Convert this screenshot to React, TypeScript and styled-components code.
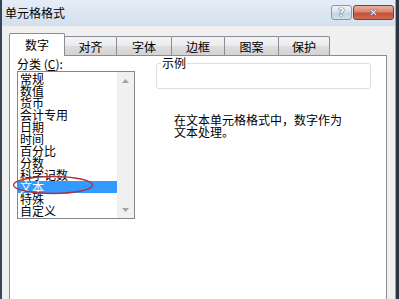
import React from "react";
import styled, { createGlobalStyle } from "styled-components";

const GlobalStyle = createGlobalStyle`
  html, body { margin: 0; padding: 0; overflow: hidden; background: #ffffff; }
  body { font-family: "Noto Sans CJK SC", "Noto Sans", sans-serif; font-size: 12px; color: #000; }
`;

const Window = styled.div`
  width: 399px;
  height: 299px;
  box-sizing: border-box;
  display: flex;
  flex-direction: column;
  background: #7eaad6;
  border-left: 2px solid #3a4656;
  border-right: 3px solid #2d3640;
  padding-right: 1px;
  overflow: hidden;
`;

const TitleBar = styled.div`
  height: 26px;
  flex: none;
  display: flex;
  align-items: flex-start;
  background: linear-gradient(#e4edf7, #d4e0ee);
  padding: 0 1px 0 3px;
`;

const Title = styled.span`
  margin-top: 6px;
  line-height: 14px;
  font-size: 12px;
  color: #000;
`;

const CaptionButtons = styled.div`
  margin-left: auto;
  margin-top: 5px;
  display: flex;
  gap: 1px;
`;

const CaptionButton = styled.div<{ $close?: boolean; $w: number }>`
  width: ${(p) => p.$w}px;
  height: 15px;
  box-sizing: border-box;
  border-radius: 3px;
  border: 1px solid ${(p) => (p.$close ? "#8a3a2c" : "#8398ae")};
  background: ${(p) =>
    p.$close
      ? "linear-gradient(#eab0a2 0%, #d98470 45%, #c4503a 55%, #cf6a52 100%)"
      : "linear-gradient(#eef3f9 0%, #d8e3ef 45%, #c2d3e6 55%, #d2deec 100%)"};
  display: flex;
  align-items: center;
  justify-content: center;
  color: #fff;
  font-family: "DejaVu Sans", sans-serif;
  font-weight: bold;
  font-size: ${(p) => (p.$close ? 10 : 11)}px;
  line-height: 1;
  text-shadow: 0 0 1px #334, 0 0 1px #334;
`;

const Client = styled.div`
  flex: 1;
  display: flex;
  flex-direction: column;
  background: #f0f0f0;
  padding: 7px 8px 0 7px;
  min-height: 0;
`;

const TabStrip = styled.div`
  height: 22px;
  flex: none;
  display: flex;
  align-items: flex-end;
`;

const Tab = styled.div<{ $active?: boolean; $w: number }>`
  position: relative;
  box-sizing: border-box;
  width: ${(p) => p.$w}px;
  height: ${(p) => (p.$active ? 23 : 19)}px;
  margin-bottom: ${(p) => (p.$active ? -1 : 0)}px;
  margin-left: -1px;
  &:first-child { margin-left: 0; }
  z-index: ${(p) => (p.$active ? 2 : 1)};
  border: 1px solid #898c95;
  border-bottom: none;
  border-radius: 2px 2px 0 0;
  background: ${(p) =>
    p.$active ? "#ffffff" : "linear-gradient(#f4f4f4 0%, #ebebeb 50%, #dddddd 51%, #d3d3d3 100%)"};
  display: flex;
  align-items: center;
  justify-content: center;
  font-size: 12px;
  line-height: 12px;
  padding-top: ${(p) => (p.$active ? 0 : 1)}px;
`;

const Panel = styled.div`
  flex: 1;
  position: relative;
  display: flex;
  background: #ffffff;
  border: 1px solid #898c95;
  border-bottom: none;
  padding: 1px 15px 0 7px;
  gap: 21px;
`;

const LeftCol = styled.div`
  display: flex;
  flex-direction: column;
`;

const FieldLabel = styled.div`
  height: 14px;
  line-height: 14px;
  font-size: 12px;
  u { text-decoration: underline; }
`;

const ListBox = styled.div`
  width: 118px;
  height: 148px;
  box-sizing: border-box;
  border: 1px solid #828790;
  display: flex;
`;

const Items = styled.div`
  flex: 1;
  padding-top: 1px;
  display: flex;
  flex-direction: column;
`;

const Item = styled.div<{ $selected?: boolean }>`
  height: 12px;
  line-height: 12px;
  padding-left: 2px;
  font-size: 12px;
  white-space: nowrap;
  background: ${(p) => (p.$selected ? "#3399ff" : "transparent")};
  color: ${(p) => (p.$selected ? "#ffffff" : "#000000")};
`;

const ScrollBar = styled.div`
  width: 17px;
  background: #f0f0f0;
  display: flex;
  flex-direction: column;
  justify-content: space-between;
`;

const ScrollArrow = styled.div`
  height: 17px;
  display: flex;
  align-items: center;
  justify-content: center;
`;

const RightCol = styled.div`
  flex: 1;
  display: flex;
  flex-direction: column;
`;

const GroupBox = styled.div`
  position: relative;
  margin-top: 6px;
  height: 26px;
  box-sizing: border-box;
  border: 1px solid #d5dfe5;
  border-radius: 3px;
`;

const GroupLabel = styled.span`
  position: absolute;
  left: 4px;
  top: -7px;
  background: #ffffff;
  padding: 0 1px;
  font-size: 12px;
  line-height: 12px;
`;

const Description = styled.p`
  margin: 25px 0 0 18px;
  font-size: 12px;
  line-height: 12px;
`;

const Marker = styled.svg`
  position: absolute;
  left: 2px;
  top: 119px;
  overflow: visible;
`;

const tabs = [
  { label: "数字", w: 56, active: true },
  { label: "对齐", w: 53 },
  { label: "字体", w: 56 },
  { label: "边框", w: 54 },
  { label: "图案", w: 55 },
  { label: "保护", w: 52 },
];

const categories = [
  "常规",
  "数值",
  "货币",
  "会计专用",
  "日期",
  "时间",
  "百分比",
  "分数",
  "科学记数",
  "文本",
  "特殊",
  "自定义",
];

export default function App() {
  return (
    <>
      <GlobalStyle />
      <Window>
        <TitleBar>
          <Title>单元格格式</Title>
          <CaptionButtons>
            <CaptionButton $w={21}>?</CaptionButton>
            <CaptionButton $w={41} $close>
              ✕
            </CaptionButton>
          </CaptionButtons>
        </TitleBar>
        <Client>
          <TabStrip>
            {tabs.map((t) => (
              <Tab key={t.label} $w={t.w} $active={t.active}>
                {t.label}
              </Tab>
            ))}
          </TabStrip>
          <Panel>
            <LeftCol>
              <FieldLabel>
                分类 (<u>C</u>):
              </FieldLabel>
              <ListBox>
                <Items>
                  {categories.map((c) => (
                    <Item key={c} $selected={c === "文本"}>
                      {c}
                    </Item>
                  ))}
                </Items>
                <ScrollBar>
                  <ScrollArrow>
                    <svg width="7" height="4" viewBox="0 0 7 4">
                      <path d="M0 4 L3.5 0 L7 4 Z" fill="#a3a3a3" />
                    </svg>
                  </ScrollArrow>
                  <ScrollArrow>
                    <svg width="7" height="4" viewBox="0 0 7 4">
                      <path d="M0 0 L3.5 4 L7 0 Z" fill="#a3a3a3" />
                    </svg>
                  </ScrollArrow>
                </ScrollBar>
              </ListBox>
            </LeftCol>
            <RightCol>
              <GroupBox>
                <GroupLabel>示例</GroupLabel>
              </GroupBox>
              <Description>
                在文本单元格格式中，数字作为
                <br />
                文本处理。
              </Description>
            </RightCol>
            <Marker width="82" height="20" viewBox="0 0 82 20">
              <ellipse cx="41" cy="10" rx="39.5" ry="8.5" fill="none" stroke="#a8323f" strokeWidth="1.3" />
            </Marker>
          </Panel>
        </Client>
      </Window>
    </>
  );
}
